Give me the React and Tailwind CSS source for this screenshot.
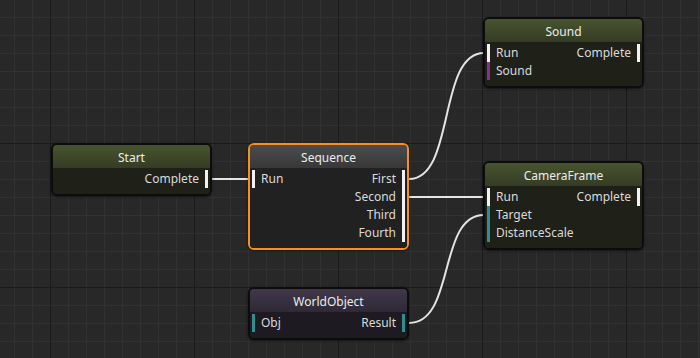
import React from 'react';

const HEAD = {
  green: 'bg-gradient-to-b from-[#48542f] to-[#343c24]',
  gray: 'bg-gradient-to-b from-[#4c4c4c] to-[#383838]',
  purple: 'bg-gradient-to-b from-[#413849] to-[#2f2937]',
};

const BODY = {
  green: 'bg-[#1f2119]',
  gray: 'bg-[#212121]',
  purple: 'bg-[#1d1a21]',
};

const BAR = {
  white: 'bg-[#f2f2f2]',
  purple: 'bg-[#8e2f8f]',
  teal: 'bg-[#2e8f8c]',
  none: 'bg-transparent',
};

const Node = ({ title, kind, pos, selected, rows }) => (
  <div
    className={`absolute w-[161px] rounded-md border-2 overflow-hidden shadow-[0_1px_3px_rgba(0,0,0,0.6)] ${pos} ${
      selected ? 'border-[#f7901e]' : 'border-[#0c0c0c]'
    }`}
  >
    <div className={`h-[23px] flex items-center justify-center pt-[3px] text-[12px] text-[#ececec] ${HEAD[kind]}`}>
      {title}
    </div>
    <div className={`pt-[2px] pb-[6px] ${BODY[kind]}`}>
      {rows.map((r, i) => (
        <div key={i} className="h-[18px] flex items-stretch px-[2px] text-[12px] text-[#dadada]">
          <span className={`w-[3px] ${BAR[r.inBar || 'none']}`} />
          <span className="flex-1 flex items-center pl-[6px]">{r.left}</span>
          <span className="flex items-center pr-[6px]">{r.right}</span>
          <span className={`w-[3px] ${BAR[r.outBar || 'none']}`} />
        </div>
      ))}
    </div>
  </div>
);

// bezier between an output port and an input port
const wire = (x1, y1, x2, y2) => {
  const d = Math.max(30, Math.abs(x2 - x1) * 0.62);
  return `M${x1} ${y1} C${x1 + d} ${y1} ${x2 - d} ${y2} ${x2} ${y2}`;
};

export default function App() {
  return (
    <div
      className="relative w-[700px] h-[358px] overflow-hidden bg-[#282828]"
      style={{ fontFamily: '"Noto Sans", "Open Sans", sans-serif' }}
    >
      <svg className="absolute inset-0" width="700" height="358">
        <defs>
          <pattern id="minor" width="18" height="18" x="14" y="17" patternUnits="userSpaceOnUse">
            <path d="M0 0.5 H18 M0.5 0 V18" stroke="#313131" strokeWidth="1" fill="none" />
          </pattern>
          <pattern id="major" width="144" height="144" x="50" y="143" patternUnits="userSpaceOnUse">
            <path d="M0 0.5 H144 M0.5 0 V144" stroke="#1b1b1b" strokeWidth="1" fill="none" />
          </pattern>
        </defs>
        <rect width="700" height="358" fill="url(#minor)" />
        <rect width="700" height="358" fill="url(#major)" />
        <g stroke="#e4e4e4" strokeWidth="2" fill="none">
          <path d="M211 179 H249" />
          <path d={wire(409, 179, 484, 53)} />
          <path d="M409 197 H484" />
          <path d={wire(409, 323, 484, 215)} />
        </g>
      </svg>

      <Node
        title="Start"
        kind="green"
        pos="left-[51px] top-[143px]"
        rows={[{ right: 'Complete', outBar: 'white' }]}
      />

      <Node
        title="Sequence"
        kind="gray"
        selected
        pos="left-[248px] top-[143px]"
        rows={[
          { left: 'Run', inBar: 'white', right: 'First', outBar: 'white' },
          { right: 'Second', outBar: 'white' },
          { right: 'Third', outBar: 'white' },
          { right: 'Fourth', outBar: 'white' },
        ]}
      />

      <Node
        title="Sound"
        kind="green"
        pos="left-[483px] top-[17px]"
        rows={[
          { left: 'Run', inBar: 'white', right: 'Complete', outBar: 'white' },
          { left: 'Sound', inBar: 'purple' },
        ]}
      />

      <Node
        title="CameraFrame"
        kind="green"
        pos="left-[483px] top-[161px]"
        rows={[
          { left: 'Run', inBar: 'white', right: 'Complete', outBar: 'white' },
          { left: 'Target', inBar: 'teal' },
          { left: 'DistanceScale', inBar: 'teal' },
        ]}
      />

      <Node
        title="WorldObject"
        kind="purple"
        pos="left-[248px] top-[287px]"
        rows={[{ left: 'Obj', inBar: 'teal', right: 'Result', outBar: 'teal' }]}
      />
    </div>
  );
}
